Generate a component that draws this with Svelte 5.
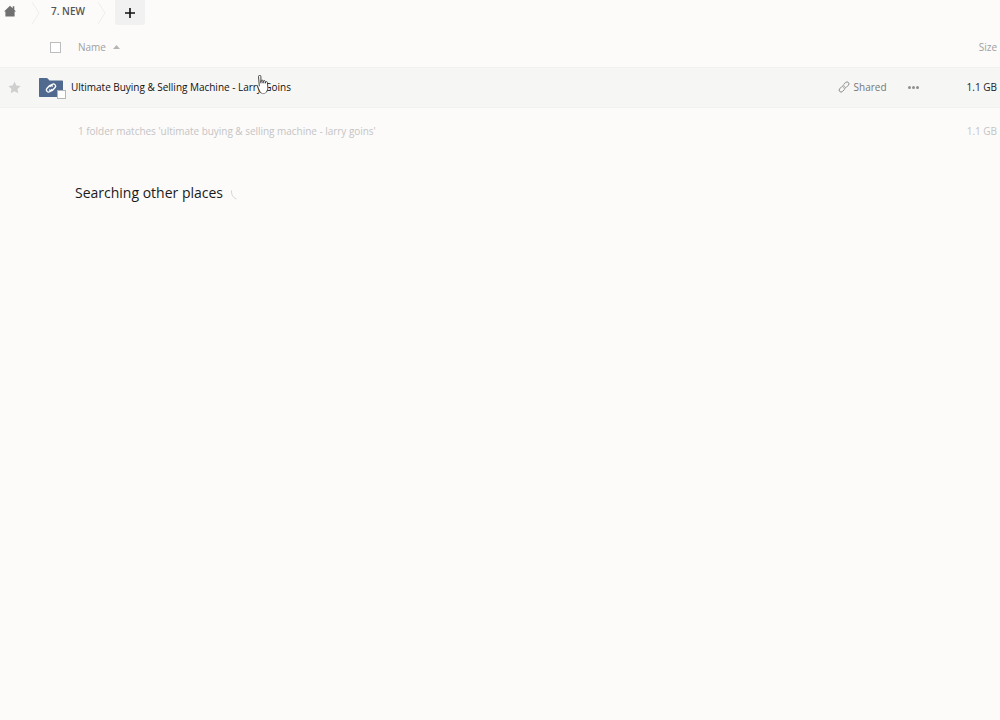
<script>
  const crumbs = ['7. NEW'];
</script>

<div class="page">
  <nav class="bar">
    <a class="home" aria-label="Home">
      <svg width="12" height="12" viewBox="0 0 12 12"><path d="M6 .8 0 6.400h1.400V11.500h9.200V6.400H12L10.300 4.800V1.300H8.700v2z" fill="#707070"/></svg>
    </a>
    <svg class="chev first" width="9" height="24" viewBox="0 0 9 24"><path d="M1 1l7 11-7 11" fill="none" stroke="#eeeeee"/></svg>
    {#each crumbs as c}
      <span class="crumb">{c}</span>
    {/each}
    <svg class="chev second" width="9" height="24" viewBox="0 0 9 24"><path d="M1 1l7 11-7 11" fill="none" stroke="#eeeeee"/></svg>
    <button class="add" aria-label="New">
      <svg width="10" height="10" viewBox="0 0 10 10"><path d="M5 0v10M0 5h10" stroke="#111" stroke-width="1.600"/></svg>
    </button>
  </nav>

  <div class="head row-grid">
    <span class="star-col"></span>
    <span class="check-col"><span class="check"></span></span>
    <span class="name-head">Name <svg width="7" height="4" viewBox="0 0 7 4"><path d="M3.500 0 7 4H0z" fill="#b5b5b5"/></svg></span>
    <span class="size-head">Size</span>
  </div>

  <div class="file row-grid">
    <span class="star-col">
      <svg width="13" height="13" viewBox="0 0 24 24"><path d="M12 1l3.400 7.300 7.900 1-5.800 5.500 1.500 7.900L12 18.800l-7 3.900 1.500-7.900L.7 9.300l7.900-1z" fill="#cfcfcf"/></svg>
    </span>
    <span class="icon-col">
      <svg width="24" height="20" viewBox="0 0 24 20">
        <path d="M0 1C0 .4.400 0 1 0h6.500c.5 0 .9.200 1.200.6L10.500 2.500H23c.6 0 1 .4 1 1V18c0 .6-.4 1-1 1H1c-.6 0-1-.4-1-1z" fill="#50698f"/>
        <g fill="none" stroke="#fff" stroke-width="1.400" stroke-linecap="round">
          <path d="M11 8.600l2-2.100a2.200 2.200 0 0 1 3.100 3.100l-2.300 2.400a2.200 2.200 0 0 1-3.100 0"/>
          <path d="M13 11.400l-2 2.100a2.200 2.200 0 0 1-3.100-3.100l2.300-2.400a2.200 2.200 0 0 1 3.100 0"/>
        </g>
      </svg>
      <span class="badge"></span>
    </span>
    <span class="fname">Ultimate Buying &amp; Selling Machine - Larry Goins</span>
    <span class="shared">
      <svg width="12" height="12" viewBox="0 0 12 12" fill="none" stroke="#8a8a8a" stroke-width="1"><path d="M5.500 3.600 7.700 1.500a1.900 1.900 0 0 1 2.700 2.700L8 6.600a1.900 1.900 0 0 1-2.700 0"/><path d="M6.700 8.300 4.400 10.500a1.900 1.900 0 0 1-2.700-2.700L4 5.400a1.900 1.900 0 0 1 2.700 0"/></svg>
      Shared
    </span>
    <span class="more"><i></i><i></i><i></i></span>
    <span class="fsize">1.1 GB</span>
  </div>

  <div class="summary">
    <span>1 folder matches 'ultimate buying &amp; selling machine - larry goins'</span>
    <span>1.1 GB</span>
  </div>

  <h2 class="other">Searching other places
    <svg class="spinner" width="6" height="10" viewBox="0 0 6 10"><path d="M.5.500C.3 4.500 1.800 7.700 5.500 9" fill="none" stroke="#d4d4d4"/></svg>
  </h2>

  <svg class="cursor" width="14" height="20" viewBox="0 0 14 20">
    <path d="M1.500 1.600a1.200 1.200 0 0 1 2.400 0V7l.3-1.300a1 1 0 0 1 1.900.2V7.400l.3-1.200a1 1 0 0 1 1.900.3v1.300l.3-.8a1 1 0 0 1 1.800.4l.4 4.800c.1 2-.4 3.300-1.200 4.600-.9 1.700-3.800 2.100-5.400 1-.8-.6-1.300-1.500-2-2.700L.7 11.500c-.4-.9.600-1.600 1.300-1l.3.400z" fill="#fff"/>
    <path d="M2.300 10.900 1.500 1.600a1.200 1.200 0 0 1 2.400 0V8m0-1 .3-1.300a1 1 0 0 1 1.900.2V8m0-.6l.3-1.200a1 1 0 0 1 1.900.3V8m0-.2l.3-.8a1 1 0 0 1 1.800.4l.4 4.800c.1 2-.4 3.300-1.200 4.600M4.100 18c-.8-.6-1.300-1.500-2-2.700L.7 11.500" fill="none" stroke="#333" stroke-width=".9" stroke-linecap="round" stroke-linejoin="round"/>
    <path d="M4.100 18c1.600 1.100 4.500.7 5.400-1" fill="none" stroke="#777" stroke-width=".8"/>
  </svg>
</div>

<style>
  :global(body) {
    margin: 0;
    background: #fcfbfa;
  }
  .page {
    position: relative;
    width: 1000px;
    height: 720px;
    overflow: hidden;
    font-family: "Open Sans", "Noto Sans", sans-serif;
    background: #fcfbfa;
  }
  .bar {
    display: flex;
    align-items: center;
    height: 25px;
  }
  .home {
    display: flex;
    width: 16px;
    margin-left: 4px;
    margin-top: -3px;
  }
  .chev.first {
    margin-left: 11px;
  }
  .crumb {
    margin-left: 11px;
    font-size: 10px;
    font-weight: 600;
    color: #555;
    margin-top: -3px;
    width: 46px;
  }
  .add {
    margin-left: 9px;
    width: 30px;
    height: 25px;
    padding: 0;
    border: 0;
    border-radius: 0 0 3px 3px;
    background: #f1f1f1;
    display: flex;
    align-items: center;
    justify-content: center;
  }
  .row-grid {
    display: flex;
    align-items: center;
  }
  .head {
    box-sizing: border-box;
    height: 42px;
    padding-top: 2px;
    font-size: 10px;
    color: #a0a0a0;
  }
  .star-col {
    width: 28px;
    display: flex;
    justify-content: center;
  }
  .check-col {
    width: 50px;
    display: flex;
    padding-left: 22px;
    padding-top: 1px;
    box-sizing: border-box;
  }
  .check {
    width: 9px;
    height: 9px;
    border: 1px solid #bdbdbd;
    background: #fff;
  }
  .name-head {
    flex: 1;
    display: flex;
    align-items: center;
    gap: 7px;
  }
  .size-head {
    margin-right: 3px;
  }
  .file {
    height: 38px;
    padding-bottom: 1px;
    background: #f6f6f5;
    border-top: 1px solid #f1f1f0;
    border-bottom: 1px solid #f1f1f0;
    font-size: 10px;
  }
  .icon-col {
    position: relative;
    width: 24px;
    height: 20px;
    margin-left: 11px;
    margin-top: 1px;
  }
  .icon-col svg {
    display: block;
  }
  .badge {
    position: absolute;
    left: 18px;
    top: 12px;
    width: 7px;
    height: 7px;
    background: #fff;
    border: 1px solid #b5b5b5;
  }
  .fname {
    flex: 1;
    margin-left: 8px;
    color: #111;
    letter-spacing: -0.02px;
  }
  .shared {
    display: flex;
    align-items: center;
    gap: 4px;
    color: #777;
    width: 70px;
  }
  .more {
    display: flex;
    gap: 1px;
    width: 59px;
  }
  .more i {
    width: 3px;
    height: 3px;
    border-radius: 50%;
    background: #8f8f8f;
  }
  .fsize {
    margin-right: 3px;
    color: #222;
  }
  .summary {
    display: flex;
    justify-content: space-between;
    padding: 16px 3px 0 78px;
    font-size: 10px;
    line-height: 14px;
    letter-spacing: -0.03px;
    color: #c4c4c4;
  }
  .other {
    margin: 45px 0 0 75px;
    font-size: 14px;
    line-height: 20px;
    font-weight: 400;
    color: #1a1a1a;
    display: flex;
    align-items: center;
    gap: 8px;
  }
  .spinner {
    margin-top: 3px;
  }
  .cursor {
    position: absolute;
    left: 257px;
    top: 75px;
  }
</style>
